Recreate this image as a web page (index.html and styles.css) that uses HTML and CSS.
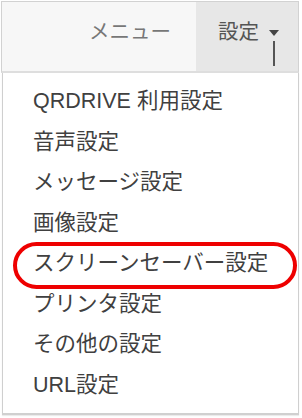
FILE: index.html
```html
<!DOCTYPE html>
<html lang="ja">
<head>
<meta charset="utf-8">
<link rel="stylesheet" href="styles.css">
</head>
<body>
<div class="frame">
  <div class="navbar">
    <a class="nav-link">メニュー</a>
    <a class="nav-link active">設定<span class="caret"></span><span class="cursor"></span></a>
  </div>
  <ul class="dropdown">
    <li class="item">QRDRIVE 利用設定</li>
    <li class="item">音声設定</li>
    <li class="item">メッセージ設定</li>
    <li class="item">画像設定</li>
    <li class="item highlighted">スクリーンセーバー設定<span class="ring"></span></li>
    <li class="item">プリンタ設定</li>
    <li class="item">その他の設定</li>
    <li class="item">URL設定</li>
  </ul>
</div>
</body>
</html>
```
FILE: styles.css
```css
html, body {
  margin: 0;
  padding: 0;
  background: #ffffff;
}
body {
  width: 302px;
  height: 418px;
  overflow: hidden;
  font-family: "Liberation Sans", "Noto Sans CJK JP", sans-serif;
  font-size: 20px;
}
.frame {
  margin: 1px 3px 0 1px;
}
.navbar {
  display: flex;
  justify-content: flex-end;
  height: 69px;
  background: #f7f7f7;
  border: 1px solid #d2d2d2;
  border-bottom: 2px solid #dedede;
}
.nav-link {
  position: relative;
  display: flex;
  align-items: center;
  padding: 0 25px 9px 24px;
  color: #777777;
  line-height: 28px;
  font-size: 20.5px;
}
.nav-link.active {
  background: #e7e7e7;
  color: #555555;
  padding: 0 19px 9px 22px;
}
.caret {
  display: inline-block;
  width: 0;
  height: 0;
  margin-left: 10px;
  margin-top: 2px;
  border-top: 6px solid #444;
  border-left: 5px solid transparent;
  border-right: 5px solid transparent;
}
.cursor {
  position: absolute;
  left: 77px;
  top: 39px;
  width: 2px;
  height: 25px;
  background: #555;
}
.dropdown {
  list-style: none;
  margin: 0 0 0 1px;
  padding: 8px 0 8px 0;
  background: #ffffff;
  border: 1px solid #cfcfcf;
  border-top: none;
  border-bottom: 2px solid #d0d0d0;
  box-shadow: 0 1px 1px rgba(0,0,0,0.08);
}
.item {
  position: relative;
  height: 40.5px;
  line-height: 40.5px;
  padding-left: 30px;
  color: #404040;
  white-space: nowrap;
  font-size: 21.5px;
}
.ring {
  position: absolute;
  left: 10px;
  right: 1px;
  top: -1px;
  bottom: -5px;
  border: 4px solid #ee0000;
  border-radius: 24px;
}
```
